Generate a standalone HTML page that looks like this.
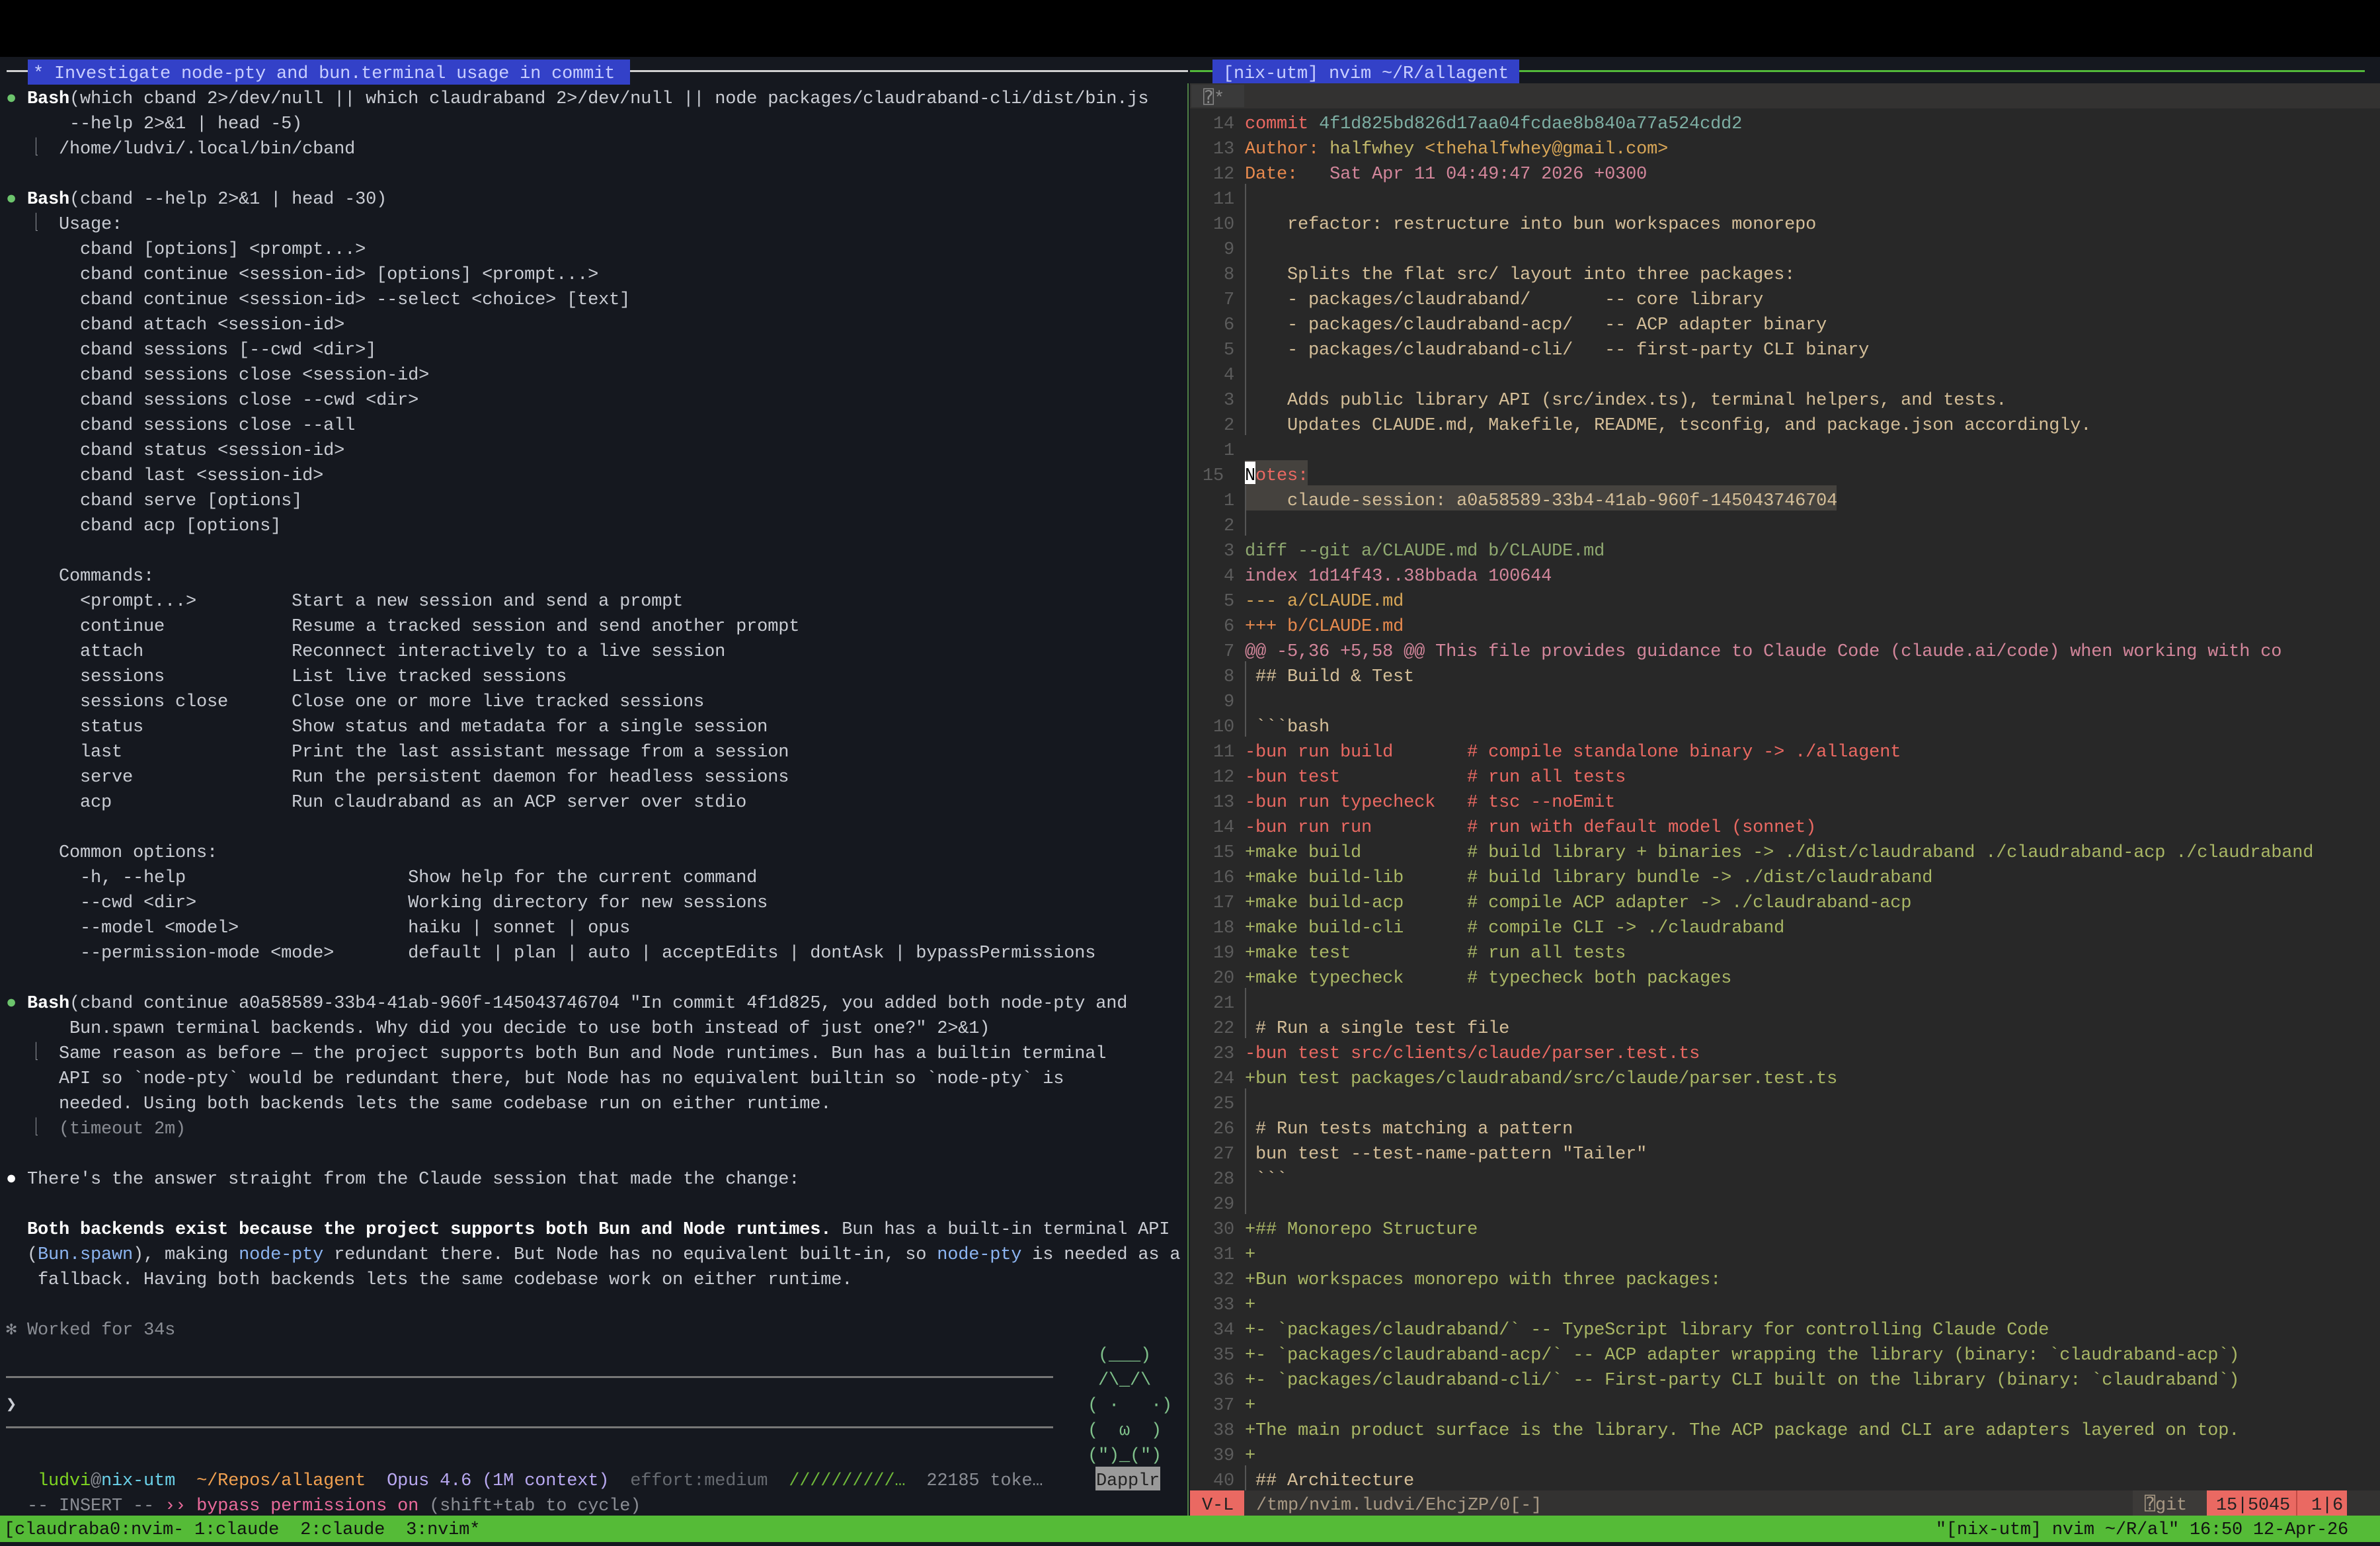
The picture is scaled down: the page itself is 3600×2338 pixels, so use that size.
<!DOCTYPE html>
<html><head><meta charset="utf-8">
<style>
html,body{margin:0;padding:0}
body{width:3600px;height:2338px;background:#15181f;position:relative;overflow:hidden;
font-family:"Liberation Mono","DejaVu Sans Mono",monospace;font-size:27px;letter-spacing:-0.2px}
pre{margin:0;font:inherit;letter-spacing:inherit;line-height:38px;white-space:pre;position:absolute}
.a{position:absolute}
.t{color:#c9ccd3}
.b{color:#fff;font-weight:bold}
.g{color:#6cc46c}
.d{color:#8a8d94}
.k{display:inline-block;width:16px;overflow:hidden;color:#8a8d94;vertical-align:top}
.o{color:#b9bcc3}
.bl{color:#8cb4f0}
.ln{color:#5c5c5c}
.rd{color:#ea6962}
.tl{color:#7daea3}
.or{color:#e78a4e}
.yl{color:#c2b86a}
.ye{color:#d8a657}
.pk{color:#d3869b}
.bg{color:#d4be98}
.gr{color:#8fa870}
.pl{color:#a9b665}
</style></head><body>
<div class="a" style="left:0;top:0;width:3600px;height:86px;background:#000"></div>
<div class="a" style="left:10px;top:106px;width:1787px;height:3px;background:#d0d0d0"></div>
<div class="a" style="left:1800px;top:106px;width:1777px;height:3px;background:#52b83a"></div>
<div class="a" style="left:42px;top:90px;width:911px;height:38px;background:#3341c8"></div>
<pre style="left:50px;top:93px;color:#c8ceff">* Investigate node-pty and bun.terminal usage in commit</pre>
<div class="a" style="left:1834px;top:90px;width:464px;height:38px;background:#3341c8"></div>
<pre style="left:1850px;top:93px;color:#c8ceff">[nix-utm] nvim ~/R/allagent</pre>

<div class="a" style="left:1796px;top:126px;width:2px;height:2166px;background:#4f7f45"></div>

<pre class="t" style="left:9px;top:131px"><span class="g">●</span> <span class="b">Bash</span>(which cband 2&gt;/dev/null || which claudraband 2&gt;/dev/null || node packages/claudraband-cli/dist/bin.js
      --help 2&gt;&amp;1 | head -5)
  <span class="k">⎿</span>  /home/ludvi/.local/bin/cband

<span class="g">●</span> <span class="b">Bash</span>(cband --help 2&gt;&amp;1 | head -30)
  <span class="k">⎿</span>  Usage:
       cband [options] &lt;prompt...&gt;
       cband continue &lt;session-id&gt; [options] &lt;prompt...&gt;
       cband continue &lt;session-id&gt; --select &lt;choice&gt; [text]
       cband attach &lt;session-id&gt;
       cband sessions [--cwd &lt;dir&gt;]
       cband sessions close &lt;session-id&gt;
       cband sessions close --cwd &lt;dir&gt;
       cband sessions close --all
       cband status &lt;session-id&gt;
       cband last &lt;session-id&gt;
       cband serve [options]
       cband acp [options]

     Commands:
       &lt;prompt...&gt;         Start a new session and send a prompt
       continue            Resume a tracked session and send another prompt
       attach              Reconnect interactively to a live session
       sessions            List live tracked sessions
       sessions close      Close one or more live tracked sessions
       status              Show status and metadata for a single session
       last                Print the last assistant message from a session
       serve               Run the persistent daemon for headless sessions
       acp                 Run claudraband as an ACP server over stdio

     Common options:
       -h, --help                     Show help for the current command
       --cwd &lt;dir&gt;                    Working directory for new sessions
       --model &lt;model&gt;                haiku | sonnet | opus
       --permission-mode &lt;mode&gt;       default | plan | auto | acceptEdits | dontAsk | bypassPermissions

<span class="g">●</span> <span class="b">Bash</span>(cband continue a0a58589-33b4-41ab-960f-145043746704 "In commit 4f1d825, you added both node-pty and
      Bun.spawn terminal backends. Why did you decide to use both instead of just one?" 2&gt;&amp;1)
  <span class="k">⎿</span>  Same reason as before — the project supports both Bun and Node runtimes. Bun has a builtin terminal
     API so &#96;node-pty&#96; would be redundant there, but Node has no equivalent builtin so &#96;node-pty&#96; is
     needed. Using both backends lets the same codebase run on either runtime.
  <span class="k">⎿</span>  <span class="d">(timeout 2m)</span>

<span style="color:#fff">●</span> There's the answer straight from the Claude session that made the change:

  <span class="b">Both backends exist because the project supports both Bun and Node runtimes.</span> Bun has a built-in terminal API
  (<span class="bl">Bun.spawn</span>), making <span class="bl">node-pty</span> redundant there. But Node has no equivalent built-in, so <span class="bl">node-pty</span> is needed as a
   fallback. Having both backends lets the same codebase work on either runtime.

<span class="d">✻ Worked for 34s</span>


❯


   <span style="color:#7ed321">ludvi</span><span class="d">@</span><span style="color:#6ad0e8">nix-utm</span>  <span style="color:#f0a050">~/Repos/allagent</span>  <span style="color:#b8a8f0">Opus 4.6 (1M context)</span>  <span style="color:#666a70">effort:medium</span>  <span style="color:#6fb83a">//////////…</span>  <span class="d">22185 toke…</span>
  <span class="d">-- INSERT --</span> <span style="color:#e86a9a">›› bypass permissions on</span> <span class="d">(shift+tab to cycle)</span></pre>
<div class="a" style="left:9px;top:2081px;width:1584px;height:3px;background:#777"></div>
<div class="a" style="left:9px;top:2157px;width:1584px;height:3px;background:#777"></div>
<pre style="left:1661px;top:2031px;color:#7fc08a">(___)</pre>
<pre style="left:1661px;top:2069px;color:#7fc08a">/\_/\</pre>
<pre style="left:1645px;top:2107px;color:#7fc08a">( ·   ·)</pre>
<pre style="left:1645px;top:2145px;color:#7fc08a">(  ω  )</pre>
<pre style="left:1645px;top:2183px;color:#7fc08a">(")_(")</pre>
<div class="a" style="left:1657px;top:2218px;width:98px;height:36px;background:#9a9a9a"></div>
<pre style="left:1658px;top:2221px;color:#222">Dapplr</pre>

<div class="a" style="left:1800px;top:126px;width:1800px;height:2166px;background:#282828"></div>
<div class="a" style="left:1800px;top:126px;width:1800px;height:38px;background:#333231"></div>
<div class="a" style="left:1802px;top:128px;width:80px;height:34px;background:#3a3a3a"></div>
<pre style="left:1820px;top:131px;color:#888">⍰*</pre>
<div class="a" style="left:1883px;top:696px;width:95px;height:38px;background:#45423e"></div>
<div class="a" style="left:1883px;top:734px;width:895px;height:38px;background:#45423e"></div>
<div class="a" style="left:1883px;top:698px;width:16px;height:34px;background:#fff"></div>
<div class="a" style="left:1883px;top:278px;width:2px;height:380px;background:#555"></div>
<div class="a" style="left:1883px;top:734px;width:2px;height:76px;background:#555"></div>
<div class="a" style="left:1883px;top:1000px;width:2px;height:114px;background:#555"></div>
<div class="a" style="left:1883px;top:1494px;width:2px;height:76px;background:#555"></div>
<div class="a" style="left:1883px;top:1646px;width:2px;height:190px;background:#555"></div>
<div class="a" style="left:1883px;top:2216px;width:2px;height:38px;background:#555"></div>
<pre class="bg" style="left:1819px;top:169px"><span class="ln"> 14</span> <span class="rd">commit</span> <span class="tl">4f1d825bd826d17aa04fcdae8b840a77a524cdd2</span>
<span class="ln"> 13</span> <span class="or">Author:</span> <span class="yl">halfwhey</span> <span class="ye">&lt;thehalfwhey@gmail.com&gt;</span>
<span class="ln"> 12</span> <span class="or">Date:</span>   <span class="pk">Sat Apr 11 04:49:47 2026 +0300</span>
<span class="ln"> 11</span>
<span class="ln"> 10</span>     refactor: restructure into bun workspaces monorepo
<span class="ln">  9</span>
<span class="ln">  8</span>     Splits the flat src/ layout into three packages:
<span class="ln">  7</span>     - packages/claudraband/       -- core library
<span class="ln">  6</span>     - packages/claudraband-acp/   -- ACP adapter binary
<span class="ln">  5</span>     - packages/claudraband-cli/   -- first-party CLI binary
<span class="ln">  4</span>
<span class="ln">  3</span>     Adds public library API (src/index.ts), terminal helpers, and tests.
<span class="ln">  2</span>     Updates CLAUDE.md, Makefile, README, tsconfig, and package.json accordingly.
<span class="ln">  1</span>
<span class="ln">15</span>  <span style="color:#000">N</span><span class="rd">otes:</span>
<span class="ln">  1</span>     claude-session: a0a58589-33b4-41ab-960f-145043746704
<span class="ln">  2</span>
<span class="ln">  3</span> <span class="gr">diff --git a/CLAUDE.md b/CLAUDE.md</span>
<span class="ln">  4</span> <span class="pk">index 1d14f43..38bbada 100644</span>
<span class="ln">  5</span> <span class="ye">--- a/CLAUDE.md</span>
<span class="ln">  6</span> <span class="or">+++ b/CLAUDE.md</span>
<span class="ln">  7</span> <span class="pk">@@ -5,36 +5,58 @@ This file provides guidance to Claude Code (claude.ai/code) when working with co</span>
<span class="ln">  8</span>  ## Build &amp; Test
<span class="ln">  9</span>
<span class="ln"> 10</span>  &#96;&#96;&#96;bash
<span class="ln"> 11</span> <span class="rd">-bun run build       # compile standalone binary -&gt; ./allagent</span>
<span class="ln"> 12</span> <span class="rd">-bun test            # run all tests</span>
<span class="ln"> 13</span> <span class="rd">-bun run typecheck   # tsc --noEmit</span>
<span class="ln"> 14</span> <span class="rd">-bun run run         # run with default model (sonnet)</span>
<span class="ln"> 15</span> <span class="pl">+make build          # build library + binaries -&gt; ./dist/claudraband ./claudraband-acp ./claudraband</span>
<span class="ln"> 16</span> <span class="pl">+make build-lib      # build library bundle -&gt; ./dist/claudraband</span>
<span class="ln"> 17</span> <span class="pl">+make build-acp      # compile ACP adapter -&gt; ./claudraband-acp</span>
<span class="ln"> 18</span> <span class="pl">+make build-cli      # compile CLI -&gt; ./claudraband</span>
<span class="ln"> 19</span> <span class="pl">+make test           # run all tests</span>
<span class="ln"> 20</span> <span class="pl">+make typecheck      # typecheck both packages</span>
<span class="ln"> 21</span>
<span class="ln"> 22</span>  # Run a single test file
<span class="ln"> 23</span> <span class="rd">-bun test src/clients/claude/parser.test.ts</span>
<span class="ln"> 24</span> <span class="pl">+bun test packages/claudraband/src/claude/parser.test.ts</span>
<span class="ln"> 25</span>
<span class="ln"> 26</span>  # Run tests matching a pattern
<span class="ln"> 27</span>  bun test --test-name-pattern "Tailer"
<span class="ln"> 28</span>  &#96;&#96;&#96;
<span class="ln"> 29</span>
<span class="ln"> 30</span> <span class="pl">+## Monorepo Structure</span>
<span class="ln"> 31</span> <span class="pl">+</span>
<span class="ln"> 32</span> <span class="pl">+Bun workspaces monorepo with three packages:</span>
<span class="ln"> 33</span> <span class="pl">+</span>
<span class="ln"> 34</span> <span class="pl">+- &#96;packages/claudraband/&#96; -- TypeScript library for controlling Claude Code</span>
<span class="ln"> 35</span> <span class="pl">+- &#96;packages/claudraband-acp/&#96; -- ACP adapter wrapping the library (binary: &#96;claudraband-acp&#96;)</span>
<span class="ln"> 36</span> <span class="pl">+- &#96;packages/claudraband-cli/&#96; -- First-party CLI built on the library (binary: &#96;claudraband&#96;)</span>
<span class="ln"> 37</span> <span class="pl">+</span>
<span class="ln"> 38</span> <span class="pl">+The main product surface is the library. The ACP package and CLI are adapters layered on top.</span>
<span class="ln"> 39</span> <span class="pl">+</span>
<span class="ln"> 40</span>  ## Architecture</pre>

<div class="a" style="left:1800px;top:2254px;width:1800px;height:38px;background:#333231"></div>
<div class="a" style="left:1800px;top:2254px;width:82px;height:38px;background:#ea6962"></div>
<pre style="left:1818px;top:2258px;color:#222">V-L</pre>
<pre style="left:1900px;top:2258px;color:#a89984">/tmp/nvim.ludvi/EhcjZP/0[-]</pre>
<div class="a" style="left:3226px;top:2254px;width:112px;height:38px;background:#3c3a38"></div>
<pre style="left:3244px;top:2258px;color:#a89984">⍰git</pre>
<div class="a" style="left:3338px;top:2254px;width:212px;height:38px;background:#ea6962"></div>
<div class="a" style="left:3473px;top:2254px;width:2px;height:38px;background:#c04a44"></div>
<pre style="left:3352px;top:2258px;color:#222">15|5045  1|6</pre>

<div class="a" style="left:0;top:2292px;width:3600px;height:40px;background:#55bb37"></div>
<pre style="left:6px;top:2295px;color:#111">[claudraba0:nvim- 1:claude  2:claude  3:nvim*</pre>
<pre style="right:48px;top:2295px;color:#111">"[nix-utm] nvim ~/R/al" 16:50 12-Apr-26</pre>
</body></html>
